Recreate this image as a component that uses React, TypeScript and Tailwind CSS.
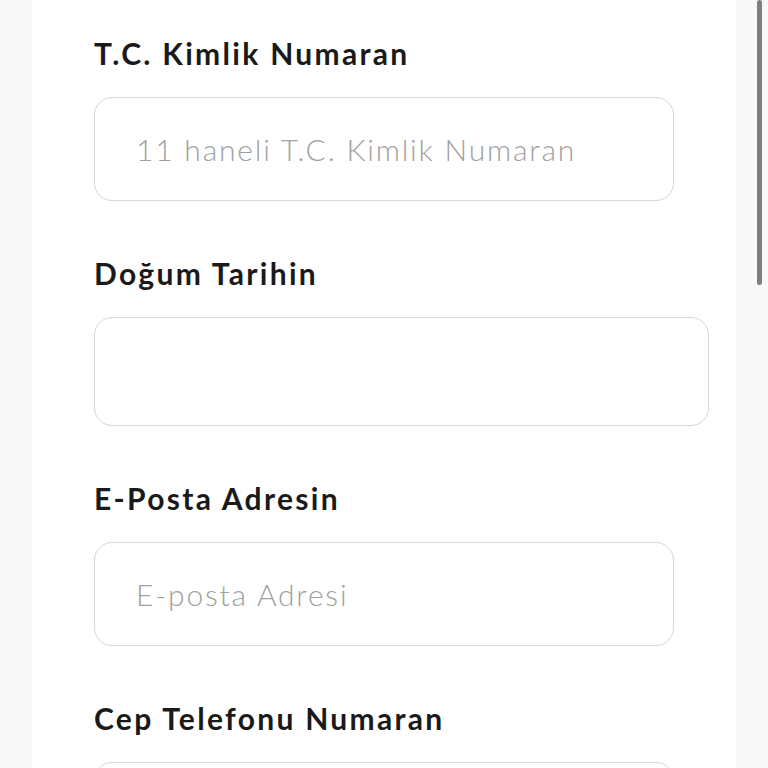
const fields = [
  { label: 'T.C. Kimlik Numaran', placeholder: '11 haneli T.C. Kimlik Numaran', wide: false },
  { label: 'Doğum Tarihin', placeholder: '', wide: true },
  { label: 'E-Posta Adresin', placeholder: 'E-posta Adresi', wide: false },
  { label: 'Cep Telefonu Numaran', placeholder: '5XX XXX XX XX', wide: false },
];

export default function App() {
  return (
    <div className="relative h-screen overflow-hidden bg-[#f8f8f8] font-['Lato',sans-serif]">
      <div className="mx-auto h-full w-[704px] bg-white pl-[62px] pt-[35px]">
        <form className="flex flex-col gap-[54px]">
          {fields.map((field) => (
            <div key={field.label} className="flex flex-col">
              <label className="mb-[26px] text-[30px] leading-[36px] font-bold tracking-[2.3px] text-[#1a1a1a]">
                {field.label}
              </label>
              <input
                type="text"
                placeholder={field.placeholder}
                className={`rounded-[18px] border-[1.5px] border-[#d6d6d6] bg-white pl-[41px] text-[30px] font-light tracking-[1.8px] text-[#333] outline-none placeholder:text-[#a0a0a0] ${
                  field.wide ? 'h-[109px] w-[615px]' : 'h-[104px] w-[580px]'
                }`}
              />
            </div>
          ))}
        </form>
      </div>
      {/* scroll thumb */}
      <div className="absolute right-[6px] top-0 h-[285px] w-[5px] rounded-full bg-[#7f7f7f]" />
    </div>
  );
}
